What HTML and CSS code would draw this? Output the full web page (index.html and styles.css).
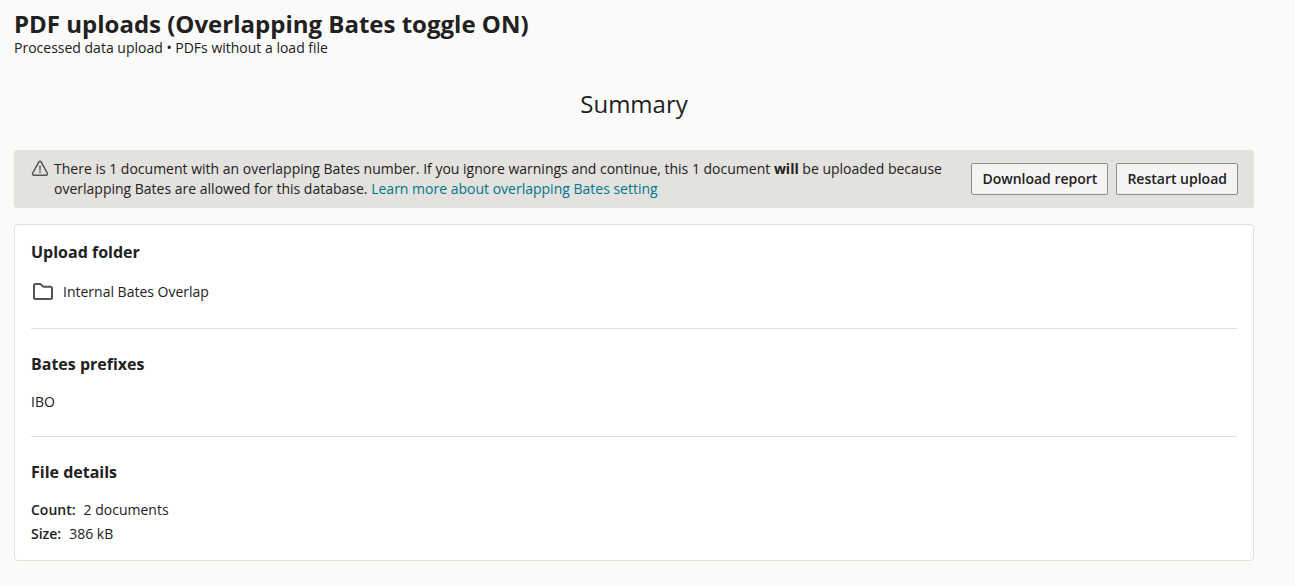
FILE: index.html
```html
<!DOCTYPE html>
<html lang="en">
<head>
<meta charset="utf-8">
<title>PDF uploads</title>
<link rel="stylesheet" href="styles.css">
</head>
<body>
<main class="page">
  <header class="page-header">
    <h1 class="page-title">PDF uploads (Overlapping Bates toggle ON)</h1>
    <p class="page-subtitle">Processed data upload • PDFs without a load file</p>
  </header>
  <h2 class="summary-title">Summary</h2>
  <section class="banner">
    <svg class="banner-icon" viewBox="0 0 20 20" aria-hidden="true"><path d="M8.900 2.900Q10 1.400 11.100 2.900L17.300 14Q17.900 16.200 16.200 16.200H3.800Q2.100 16.200 2.700 14Z"/><path d="M10 7.300v1.300M10 9.800v1.200M10 13v.5"/></svg>
    <p class="banner-text">There is 1 document with an overlapping Bates number. If you ignore warnings and continue, this 1 document <strong>will</strong> be uploaded because overlapping Bates are allowed for this database. <a class="link" href="#">Learn more about overlapping Bates setting</a></p>
    <div class="banner-actions">
      <button class="button" type="button">Download report</button>
      <button class="button" type="button">Restart upload</button>
    </div>
  </section>
  <div class="card">
    <section class="card-section">
      <h3 class="section-title">Upload folder</h3>
      <div class="folder">
        <svg class="folder-icon" viewBox="0 0 24 24" aria-hidden="true"><path d="M4.500 4h4.300q.7 0 1.200.5L11.700 6.300q.5.500 1.200.5h6.600q1.500 0 1.500 1.500v9.200q0 1.500-1.500 1.500h-15q-1.500 0-1.500-1.500v-12q0-1.500 1.500-1.500Z"/></svg>
        <span>Internal Bates Overlap</span>
      </div>
    </section>
    <section class="card-section">
      <h3 class="section-title">Bates prefixes</h3>
      <p class="value">IBO</p>
    </section>
    <section class="card-section">
      <h3 class="section-title">File details</h3>
      <dl class="details">
        <div class="detail"><dt>Count:</dt><dd>2 documents</dd></div>
        <div class="detail"><dt>Size:</dt><dd>386 kB</dd></div>
      </dl>
    </section>
  </div>
</main>
</body>
</html>
```
FILE: styles.css
```css
* { box-sizing: border-box; }
body { margin: 0; background: #fafaf8; color: #212121; font: 14px/20px "Open Sans", sans-serif; }
h1, h2, h3, p, dl, dd { margin: 0; }
.page { padding: 8px 41px 24px 14px; }
.page-title { font-size: 24px; line-height: 32px; font-weight: 700; }
.page-subtitle { line-height: 16px; }
.summary-title { margin-top: 32px; font-size: 24px; line-height: 32px; font-weight: 400; text-align: center; }
.banner { display: flex; margin-top: 30px; padding: 9px 16px; background: #e3e2de; border-radius: 3px; }
.banner-icon { flex: none; width: 20px; height: 20px; margin-right: 4px; }
.banner-icon, .folder-icon { fill: none; stroke: #55554f; stroke-width: 1.5; stroke-linejoin: round; stroke-linecap: round; }
.banner-text { flex: 1; }
.link { color: #00758a; text-decoration: none; }
.banner-actions { display: flex; align-items: center; gap: 8px; margin-left: 16px; }
.button { height: 32px; padding: 0 10px; border: 1px solid #8f8f8a; border-radius: 2px; background: #f5f4f2; color: #212121; font: 600 14px/20px "Open Sans", sans-serif; white-space: nowrap; }
.card { margin-top: 16px; padding: 0 16px; background: #fff; border: 1px solid #e0e0dd; border-radius: 4px; }
.card-section { padding: 24px 0; }
.card-section:first-child { padding-top: 16px; }
.card-section:last-child { padding-bottom: 16px; }
.card-section + .card-section { border-top: 1px solid #e0e0dd; }
.section-title { margin-bottom: 17px; font-size: 16px; line-height: 22px; font-weight: 700; }
.folder { display: flex; align-items: center; gap: 8px; height: 24px; }
.folder-icon { width: 24px; height: 24px; stroke-width: 2; }
.details { display: grid; gap: 4px; }
.detail { display: flex; gap: 8px; }
.detail dt { font-weight: 600; }
```
